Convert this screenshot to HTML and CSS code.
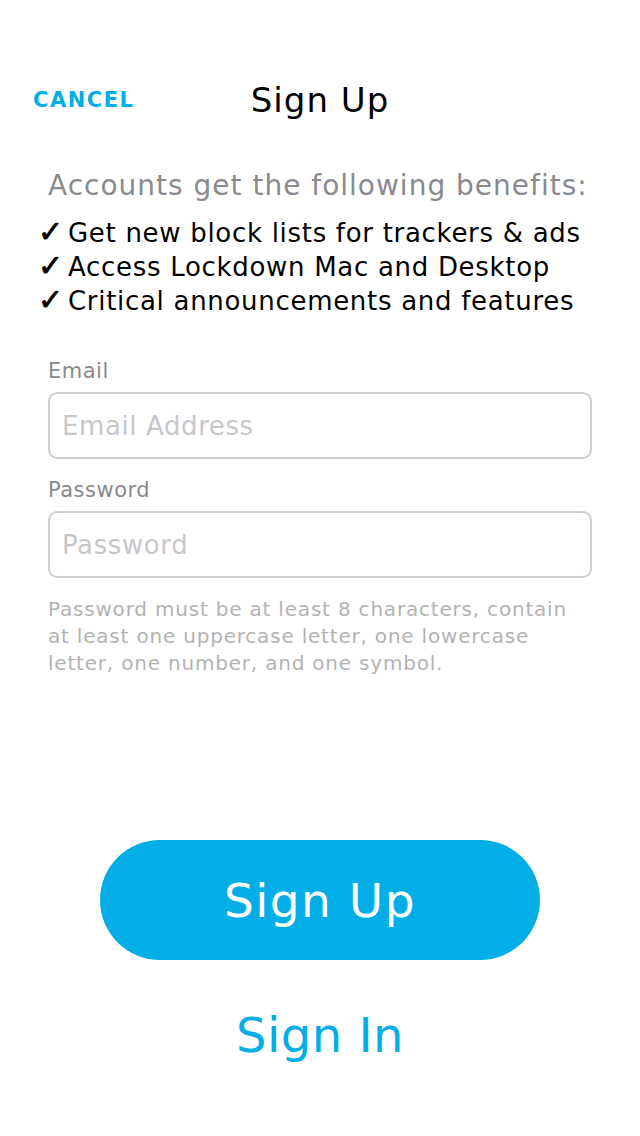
FILE: index.html
```html
<!DOCTYPE html>
<html>
<head>
<meta charset="utf-8">
<link rel="stylesheet" href="styles.css">
</head>
<body>
<div class="page">
  <header class="header">
    <a class="cancel">CANCEL</a>
    <h1 class="title">Sign Up</h1>
    <span></span>
  </header>
  <p class="benefits-title">Accounts get the following benefits:</p>
  <ul class="benefits">
    <li><span class="check">✓</span>Get new block lists for trackers &amp; ads</li>
    <li><span class="check">✓</span>Access Lockdown Mac and Desktop</li>
    <li><span class="check">✓</span>Critical announcements and features</li>
  </ul>
  <form class="form">
    <label class="label">Email</label>
    <input class="field" type="text" placeholder="Email Address">
    <label class="label">Password</label>
    <input class="field" type="password" placeholder="Password">
    <p class="hint">Password must be at least 8 characters, contain at least one uppercase letter, one lowercase letter, one number, and one symbol.</p>
  </form>
  <div class="actions">
    <button class="primary" type="button">Sign Up</button>
    <a class="secondary">Sign In</a>
  </div>
</div>
</body>
</html>
```
FILE: styles.css
```css
* { box-sizing: border-box; }
html, body { margin: 0; padding: 0; background: #fff; }
body { font-family: "DejaVu Sans", "Noto Sans", sans-serif; width: 640px; height: 1136px; }
.page { display: flex; flex-direction: column; padding-top: 80px; height: 1136px; }
.header { display: grid; grid-template-columns: 1fr auto 1fr; align-items: center; height: 40px; }
.cancel { color: #03ade6; font-weight: bold; font-size: 21px; padding-left: 33px; letter-spacing: 1.5px; }
.title { margin: 0; font-weight: normal; font-size: 34px; color: #000; letter-spacing: 1px; }
.benefits-title { margin: 48px 0 0 48px; font-size: 28px; color: #8a8a8e; line-height: 36px; letter-spacing: 1px; }
.benefits { list-style: none; margin: 12px 0 0 38px; padding: 0; font-size: 26px; line-height: 34px; color: #000; letter-spacing: 0.7px; }
.benefits li { height: 34px; }
.check { display: inline-block; width: 30px; font-size: 30px; line-height: 20px; font-weight: bold; letter-spacing: 0; -webkit-text-stroke: 0.8px #000; }
.form { display: flex; flex-direction: column; padding: 0 48px; margin-top: 38px; }
.label { font-size: 21px; color: #8a8a8e; line-height: 30px; margin-bottom: 6px; letter-spacing: 0.5px; }
.field { height: 67px; border: 2px solid #cfcfcf; border-radius: 9px; padding: 0 12px; font-family: inherit; font-size: 26px; margin-bottom: 16px; outline: none; letter-spacing: 0.6px; }
.field::placeholder { color: #c7c7cb; }
.hint { margin: 2px 0 0; font-size: 20px; line-height: 27px; color: #b3b3b3; letter-spacing: 0.8px; }
.actions { display: flex; flex-direction: column; align-items: center; margin-top: auto; margin-bottom: 73px; }
.primary { width: 440px; height: 120px; border: none; border-radius: 60px; background: #03aee7; color: #fff; font-family: inherit; font-size: 47px; letter-spacing: 1.5px; }
.secondary { margin-top: 47px; color: #03aee7; font-size: 48px; letter-spacing: 0.5px; }
```
